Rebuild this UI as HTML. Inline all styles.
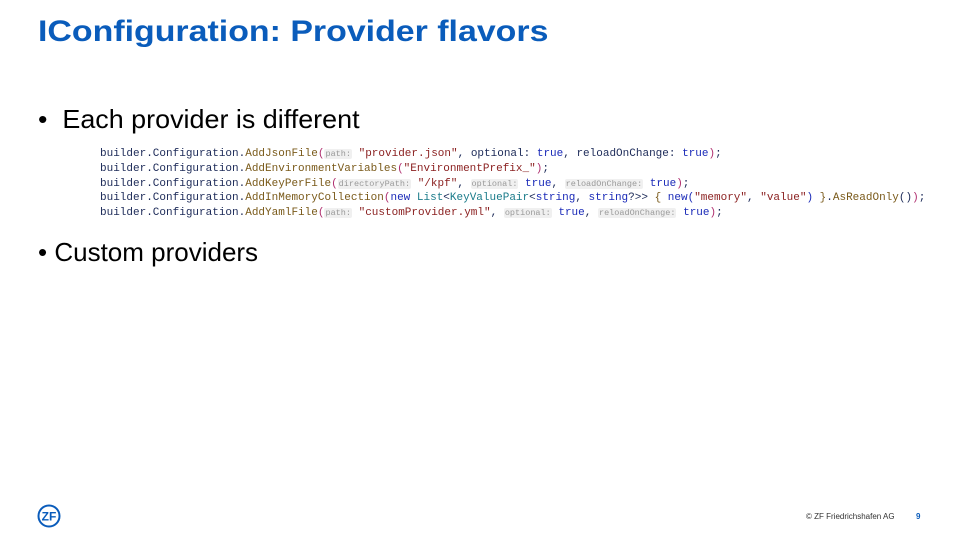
<!DOCTYPE html>
<html><head><meta charset="utf-8"><style>
body{margin:0;width:960px;height:540px;background:#fff;position:relative;overflow:hidden;font-family:"Liberation Sans",sans-serif}
.t{position:absolute;left:38px;top:15px;font-size:30px;font-weight:bold;color:#0a5cbb;white-space:nowrap;transform:scaleX(1.13);transform-origin:0 0}
.b{position:absolute;font-size:26px;color:#000;white-space:nowrap}
pre{position:absolute;left:100px;top:147px;margin:0;font-family:"Liberation Mono",monospace;font-size:11px;line-height:14.8px;color:#1c2a58}
.m{color:#7a5a1a}.s{color:#8a1f1f}.k{color:#1a2ab8}.p{color:#b03070}.c{color:#1a7b8a}
.h{font-size:8.5px;color:#999;background:#f0f0f0;padding:0 1px;border-radius:2px}
.f{position:absolute;top:512px;font-size:8px;color:#333}
</style></head><body>
<div class="t">IConfiguration: Provider flavors</div>
<div class="b" style="left:38px;top:104px;transform:scaleX(1.035);transform-origin:0 0">•&nbsp; Each provider is different</div>
<pre>builder.Configuration.<span class="m">AddJsonFile</span><span class="p">(</span><span class="h">path:</span> <span class="s">"provider.json"</span>, optional: <span class="k">true</span>, reloadOnChange: <span class="k">true</span><span class="p">)</span>;
builder.Configuration.<span class="m">AddEnvironmentVariables</span><span class="p">(</span><span class="s">"EnvironmentPrefix_"</span><span class="p">)</span>;
builder.Configuration.<span class="m">AddKeyPerFile</span><span class="p">(</span><span class="h">directoryPath:</span> <span class="s">"/kpf"</span>, <span class="h">optional:</span> <span class="k">true</span>, <span class="h">reloadOnChange:</span> <span class="k">true</span><span class="p">)</span>;
builder.Configuration.<span class="m">AddInMemoryCollection</span><span class="p">(</span><span class="k">new</span> <span class="c">List</span>&lt;<span class="c">KeyValuePair</span>&lt;<span class="k">string</span>, <span class="k">string</span>?&gt;&gt; <span class="m">{</span> <span class="k">new</span><span class="k">(</span><span class="s">"memory"</span>, <span class="s">"value"</span><span class="k">)</span> <span class="m">}</span>.<span class="m">AsReadOnly</span>()<span class="p">)</span>;
builder.Configuration.<span class="m">AddYamlFile</span><span class="p">(</span><span class="h">path:</span> <span class="s">"customProvider.yml"</span>, <span class="h">optional:</span> <span class="k">true</span>, <span class="h">reloadOnChange:</span> <span class="k">true</span><span class="p">)</span>;</pre>
<div class="b" style="left:38px;top:237px">• Custom providers</div>
<svg style="position:absolute;left:37px;top:504px" width="24" height="24" viewBox="0 0 24 24"><circle cx="12" cy="12" r="10.5" fill="none" stroke="#0a5cbb" stroke-width="2"/><text x="12" y="16.5" text-anchor="middle" font-family="Liberation Sans" font-weight="bold" font-size="12" fill="#0a5cbb">ZF</text></svg>
<div class="f" style="left:806px">© ZF Friedrichshafen AG</div>
<div class="f" style="left:916px;font-weight:bold;color:#0a5cbb">9</div>
</body></html>
